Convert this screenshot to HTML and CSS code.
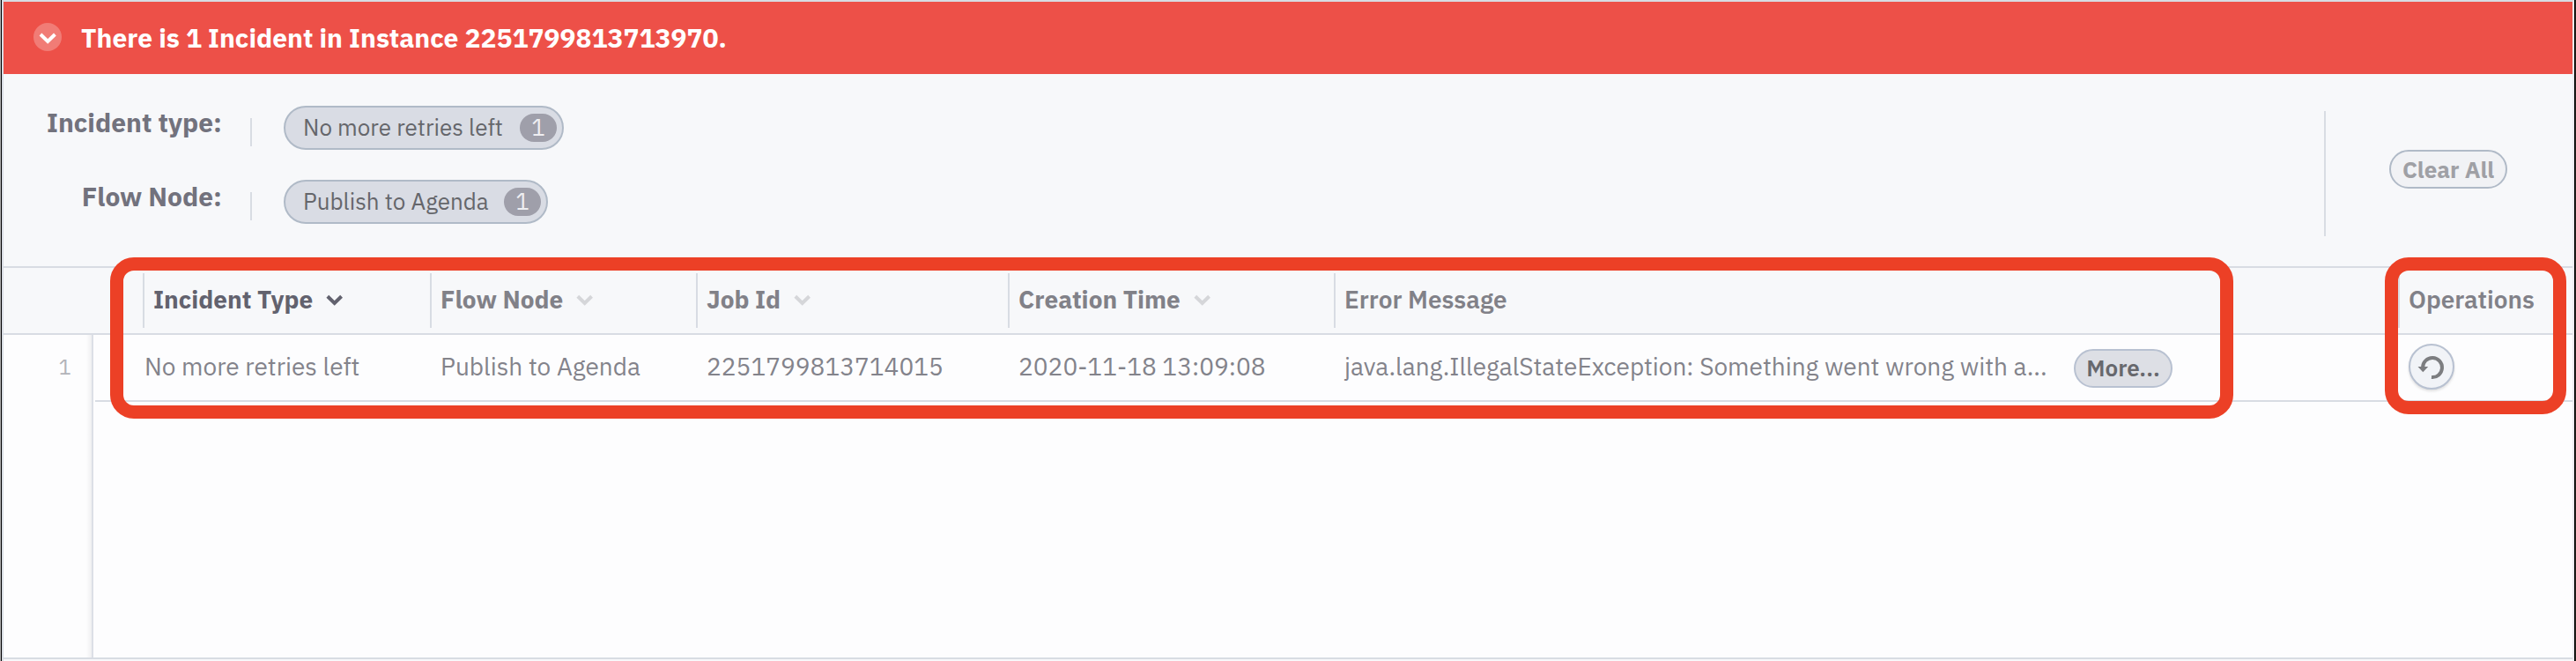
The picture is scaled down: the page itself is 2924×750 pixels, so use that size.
FILE: index.html
```html
<!DOCTYPE html>
<html lang="en">
<head>
<meta charset="utf-8">
<title>Incidents</title>
<link rel="stylesheet" href="styles.css">
</head>
<body>
<main class="frame">
  <section class="panel">
    <header class="banner">
      <svg class="toggle" viewBox="0 0 32 32"><circle cx="16" cy="16" r="16" fill="#fff" fill-opacity=".25"/><path d="M8 13l8.2 7.9 8.2-7.9" fill="none" stroke="#fff" stroke-width="4"/></svg>
      <h1 class="title">There is 1 Incident in Instance 2251799813713970.</h1>
    </header>

    <div class="filters">
      <div class="filter-list">
        <div class="filter">
          <span class="filter-label">Incident type:</span>
          <span class="pill"><span class="pill-text">No more retries left</span><span class="count">1</span></span>
        </div>
        <div class="filter">
          <span class="filter-label">Flow Node:</span>
          <span class="pill"><span class="pill-text pill-node">Publish to Agenda</span><span class="count">1</span></span>
        </div>
      </div>
      <div class="clear"><button class="button clear-button">Clear All</button></div>
    </div>

    <div class="columns head">
      <span class="gutter"></span>
      <div class="th active"><span>Incident Type</span><svg class="sort" viewBox="0 0 20 14"><path d="M1.8 2.3l7.9 7.7 7.9-7.7"/></svg></div>
      <div class="th"><span>Flow Node</span><svg class="sort" viewBox="0 0 20 14"><path d="M1.8 2.3l7.9 7.7 7.9-7.7"/></svg></div>
      <div class="th"><span>Job Id</span><svg class="sort" viewBox="0 0 20 14"><path d="M1.8 2.3l7.9 7.7 7.9-7.7"/></svg></div>
      <div class="th"><span>Creation Time</span><svg class="sort" viewBox="0 0 20 14"><path d="M1.8 2.3l7.9 7.7 7.9-7.7"/></svg></div>
      <div class="th plain"><span>Error Message</span></div>
      <div class="th plain"><span>Operations</span></div>
    </div>

    <div class="body">
      <div class="index"><span class="index-number">1</span></div>
      <div class="rows">
        <div class="row">
          <div class="td first">No more retries left</div>
          <div class="td">Publish to Agenda</div>
          <div class="td">2251799813714015</div>
          <div class="td">2020-11-18 13:09:08</div>
          <div class="td"><span class="message-text">java.lang.IllegalStateException: Something went wrong with a...</span><button class="button more">More...</button></div>
          <div class="td"><button class="retry" aria-label="Retry"><svg class="retry-icon" viewBox="0 0 52 52"><path d="M26 38A11 11 0 1 0 16 27" fill="none" stroke="#7c7d80" stroke-width="4"/><path d="M10.5 26H22.2L16.3 32.3Z" fill="#7c7d80"/></svg></button></div>
        </div>
      </div>
    </div>
    <div class="bottom"></div>
  </section>
  <div class="mark mark-row"></div>
  <div class="mark mark-operations"></div>
</main>
</body>
</html>
```
FILE: styles.css
```css
* { box-sizing: border-box; }
body { margin: 0; font-family: "IBM Plex Sans", Roboto, "Noto Sans", sans-serif; }
button { font-family: inherit; padding: 0; }
.frame {
  position: relative;
  height: 750px;
  padding: 0 2px;
  background: linear-gradient(90deg, #b4b4b4 0 1px, #000 1px 2px, transparent 2px 2922px, #000 2922px 2923px, #25261f 2923px);
}
.panel {
  height: 750px;
  display: flex;
  flex-direction: column;
  background: #fdfdfe;
  border: solid #d8dce3;
  border-width: 2px 2px 0;
  border-right-color: #ececef;
}
.banner {
  height: 82px;
  display: flex;
  align-items: center;
  padding-left: 34px;
  background: #ed5048;
}
.toggle { width: 32px; height: 32px; margin: -2px 22px 0 0; }
.title {
  margin: 0;
  color: #fff;
  font-size: 30px;
  font-weight: 700;
  line-height: 40px;
}
.filters { height: 218px; display: flex; justify-content: space-between; background: #f7f8fa; }
.filter-list { display: flex; flex-direction: column; gap: 34px; padding-top: 36px; }
.filter { display: flex; height: 50px; }
.filter-label {
  width: 282px;
  height: 46px;
  line-height: 38px;
  padding-right: 34px;
  color: #72727d;
  font-size: 30px;
  font-weight: 700;
  text-align: right;
  background: linear-gradient(#d8dce3, #d8dce3) right 0 top 14px / 2px 32px no-repeat;
}
.pill {
  display: flex;
  align-items: center;
  height: 50px;
  margin-left: 36px;
  padding: 0 6px 0 20px;
  border: 2px solid #b0bac7;
  border-radius: 25px;
  background: #d9dce4;
  color: #65666b;
  font-size: 26px;
}
.pill-text { width: 246px; white-space: nowrap; line-height: 32px; margin-top: -2px; }
.pill-node { width: 228px; }
.count {
  width: 42px;
  height: 32px;
  border-radius: 16px;
  background: #9f9faa;
  color: #eeeef1;
  text-align: center;
  line-height: 30px;
}
.clear {
  width: 282px;
  height: 142px;
  margin-top: 42px;
  border-left: 2px solid #d8dce3;
  padding: 44px 0 0 72px;
}
.button {
  height: 44px;
  border: 2px solid #b0bac7;
  border-radius: 22px;
  font-size: 26px;
  font-weight: 600;
  line-height: 40px;
}
.clear-button { width: 134px; background: #f1f2f5; color: #9fa0a5; font-weight: 700; }
.columns { display: grid; grid-template-columns: 158px 326px 302px 354px 370px 1208px 198px; }
.head {
  height: 78px;
  border: solid #d8dce3;
  border-width: 2px 0;
  background: #f7f8fa;
}
.th {
  display: flex;
  align-items: center;
  height: 62px;
  margin-top: 6px;
  padding: 0 0 4px 10px;
  border-left: 2px solid #d8dce3;
  color: #818188;
  font-size: 28px;
  font-weight: 700;
}
.plain { font-weight: 600; }
.active { color: #62626e; }
.sort { width: 20px; height: 14px; margin: 3px 0 0 15px; fill: none; stroke: #d5d6d9; stroke-width: 4; }
.active .sort { stroke: #62626e; }
.body { height: 366px; display: flex; }
.index {
  width: 102px;
  border-right: 2px solid #dcdfe6;
  background: linear-gradient(90deg, transparent 94px, #efeff1 100px);
  text-align: right;
  padding-right: 23px;
}
.index-number { color: #b2b3b9; font-size: 24px; line-height: 72px; }
.rows { flex: 1; padding-left: 2px; }
.row {
  display: grid;
  grid-template-columns: 380px 302px 354px 370px 1208px 198px;
  height: 76px;
  border-bottom: 2px solid #d8dce3;
}
.td {
  display: flex;
  align-items: center;
  height: 70px;
  padding-left: 12px;
  color: #83838b;
  font-size: 28px;
  white-space: nowrap;
}
.first { padding-left: 56px; }
.message-text { width: 828px; }
.more { width: 112px; margin-top: 6px; background: #dddfe5; border-color: #b8c1d1; color: #67686d; line-height: 36px; padding-bottom: 2px; }
.retry {
  width: 52px;
  height: 52px;
  margin-top: 2px;
  border: 2px solid #b8c1d1;
  border-radius: 50%;
  background: #f1f3f7;
  box-shadow: 0 2px 3px rgba(0, 0, 0, .12);
}
.retry-icon { display: block; width: 52px; height: 52px; margin: -2px; }
.bottom { height: 4px; border-top: 2px solid #d8dce3; background: #f7f8fa; }
.mark { position: absolute; top: 292px; border: 15px solid #ec4026; border-radius: 27px; }
.mark-row { left: 124.5px; width: 2410.5px; height: 183px; }
.mark-operations { left: 2706.5px; width: 206.5px; height: 178px; }
```
